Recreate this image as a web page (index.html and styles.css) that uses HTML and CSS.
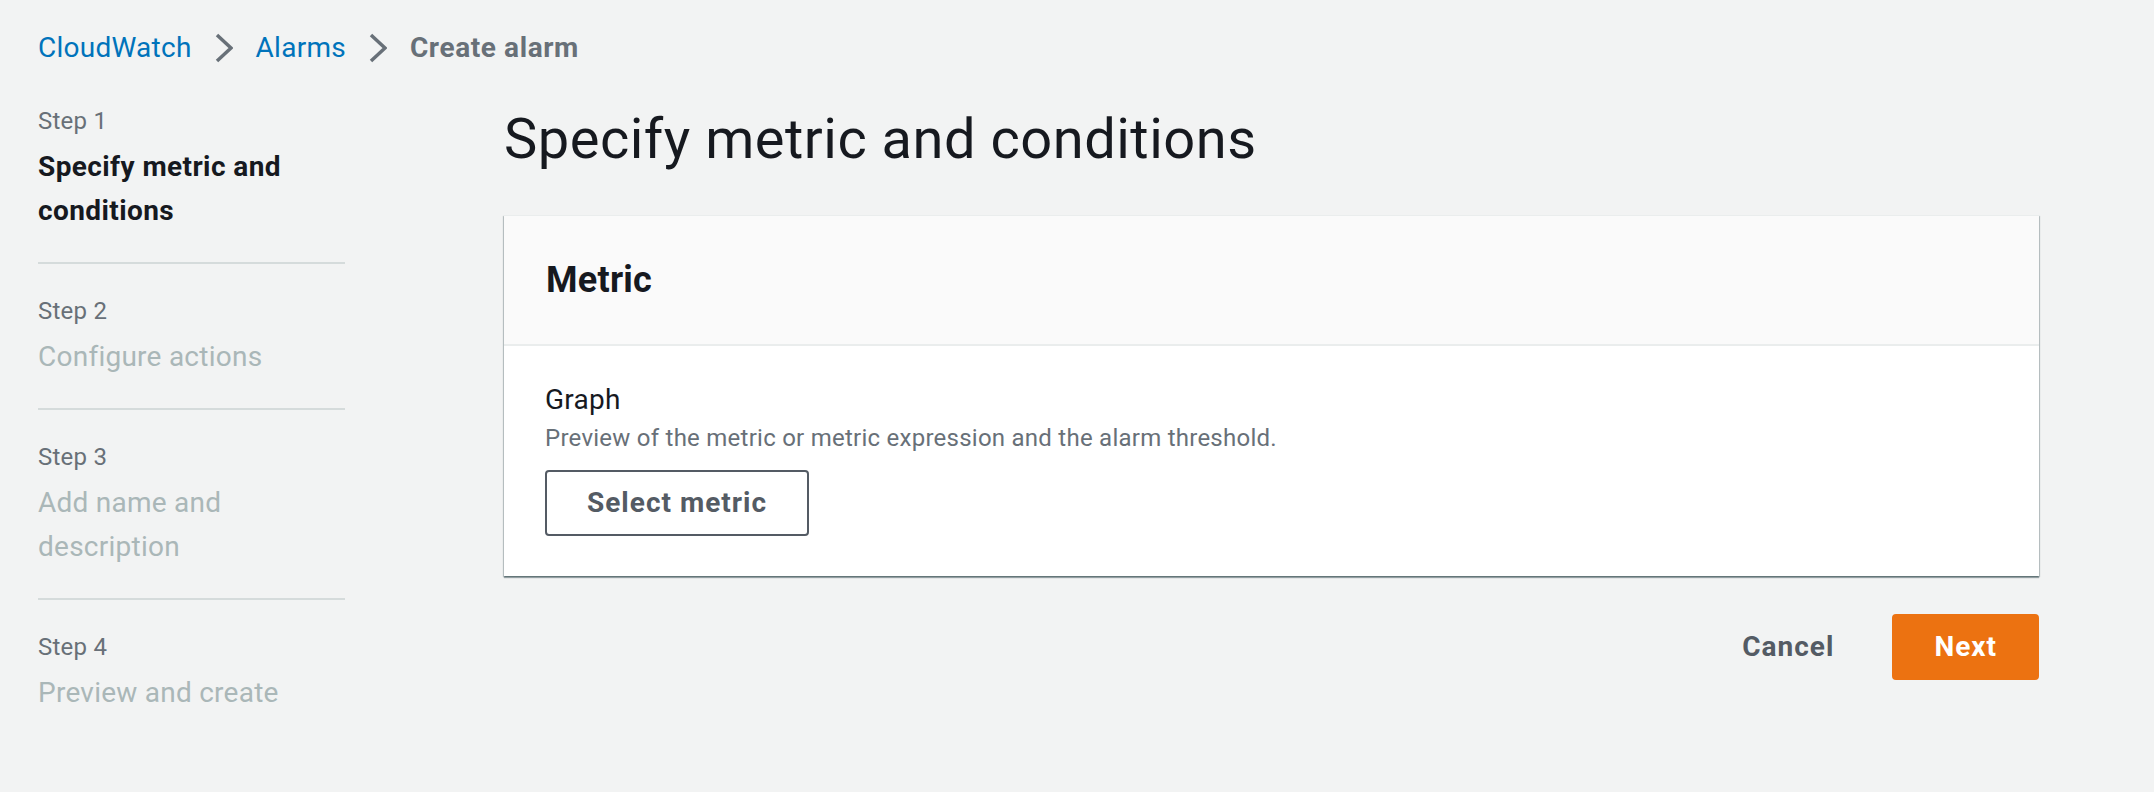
FILE: index.html
```html
<!DOCTYPE html>
<html lang="en">
<head>
<meta charset="utf-8">
<title>Create alarm</title>
<link rel="stylesheet" href="styles.css">
</head>
<body>
<div class="page">
  <nav class="breadcrumbs">
    <a class="crumb-link" href="#">CloudWatch</a>
    <span class="crumb-sep"><svg width="18" height="30" viewBox="0 0 18 30"><polyline points="2,2 16,15 2,28" fill="none" stroke="#687078" stroke-width="3.5" stroke-linejoin="miter"/></svg></span>
    <a class="crumb-link" href="#">Alarms</a>
    <span class="crumb-sep"><svg width="18" height="30" viewBox="0 0 18 30"><polyline points="2,2 16,15 2,28" fill="none" stroke="#687078" stroke-width="3.5" stroke-linejoin="miter"/></svg></span>
    <span class="crumb-current">Create alarm</span>
  </nav>
  <div class="layout">
    <ol class="steps">
      <li class="step">
        <div class="step-label">Step 1</div>
        <div class="step-title active">Specify metric and conditions</div>
      </li>
      <li class="step">
        <div class="step-label">Step 2</div>
        <div class="step-title">Configure actions</div>
      </li>
      <li class="step">
        <div class="step-label">Step 3</div>
        <div class="step-title">Add name and description</div>
      </li>
      <li class="step last">
        <div class="step-label">Step 4</div>
        <div class="step-title">Preview and create</div>
      </li>
    </ol>
    <main class="main">
      <h1 class="title">Specify metric and conditions</h1>
      <section class="card">
        <header class="card-header">
          <h2 class="card-title">Metric</h2>
        </header>
        <div class="card-body">
          <div class="field-label">Graph</div>
          <div class="field-desc">Preview of the metric or metric expression and the alarm threshold.</div>
          <button class="btn btn-normal">Select metric</button>
        </div>
      </section>
      <div class="actions">
        <button class="btn btn-link">Cancel</button>
        <button class="btn btn-primary">Next</button>
      </div>
    </main>
  </div>
</div>
</body>
</html>
```

FILE: styles.css
```css
* { box-sizing: border-box; }
html, body {
  margin: 0;
  padding: 0;
  background: #f2f3f3;
  font-family: Roboto, "Liberation Sans", Arial, sans-serif;
  color: #16191f;
  letter-spacing: 0.25px;
}
.page {
  padding: 26px 115px 0 38px;
}
.breadcrumbs {
  display: flex;
  align-items: center;
  height: 44px;
  font-size: 28px;
  line-height: 44px;
}
.crumb-link {
  color: #0073bb;
  text-decoration: none;
}
.crumb-sep {
  display: flex;
  align-items: center;
  margin: 0 23px 0 23px;
}
.crumb-sep svg { display: block; }
.crumb-current {
  color: #687078;
  font-weight: 700;
  letter-spacing: 0.6px;
}
.layout {
  display: flex;
  gap: 159px;
}
.steps {
  list-style: none;
  margin: 0;
  padding: 35px 0 0 0;
  width: 307px;
  flex: none;
}
.step {
  padding: 31px 0 29px 0;
  border-bottom: 2px solid #d5dbdb;
}
.step:first-child { padding-top: 0; }
.step.last { border-bottom: none; }
.step-label {
  font-size: 24px;
  line-height: 32px;
  color: #687078;
  margin-bottom: 8px;
}
.step-title {
  font-size: 28px;
  line-height: 44px;
  color: #aab7b8;
}
.step-title.active {
  color: #16191f;
  font-weight: 700;
  letter-spacing: 0.4px;
}
.main {
  flex: 1;
  min-width: 0;
}
.title {
  margin: 29px 0 36px 0;
  font-size: 56px;
  line-height: 80px;
  font-weight: 400;
  color: #16191f;
  letter-spacing: 0.5px;
}
.card {
  background: #ffffff;
  box-shadow: 0 2px 1px 0 rgba(0, 28, 36, 0.35), 1px 1px 1px 0 rgba(0, 28, 36, 0.2), -1px 1px 1px 0 rgba(0, 28, 36, 0.2);
  border-top: 1px solid #eaeded;
}
.card-header {
  background: #fafafa;
  padding: 39px 42px 39px 42px;
  border-bottom: 2px solid #eaeded;
}
.card-title {
  margin: 0;
  font-size: 36px;
  line-height: 50px;
  font-weight: 700;
  color: #16191f;
}
.card-body {
  padding: 32px 42px 40px 41px;
}
.field-label {
  font-size: 28px;
  line-height: 44px;
  color: #16191f;
}
.field-desc {
  font-size: 24px;
  line-height: 32px;
  color: #687078;
}
.btn {
  font-family: inherit;
  font-size: 28px;
  line-height: 44px;
  font-weight: 700;
  letter-spacing: 1px;
  padding: 9px 40px;
  border-radius: 4px;
  border: 2px solid transparent;
  background: none;
  cursor: pointer;
}
.btn-normal {
  margin-top: 16px;
  border-color: #545b64;
  color: #545b64;
  background: #ffffff;
}
.actions {
  display: flex;
  justify-content: flex-end;
  gap: 16px;
  margin-top: 38px;
}
.btn-link {
  color: #545b64;
}
.btn-primary {
  background: #ec7211;
  border-color: #ec7211;
  color: #ffffff;
}
```
